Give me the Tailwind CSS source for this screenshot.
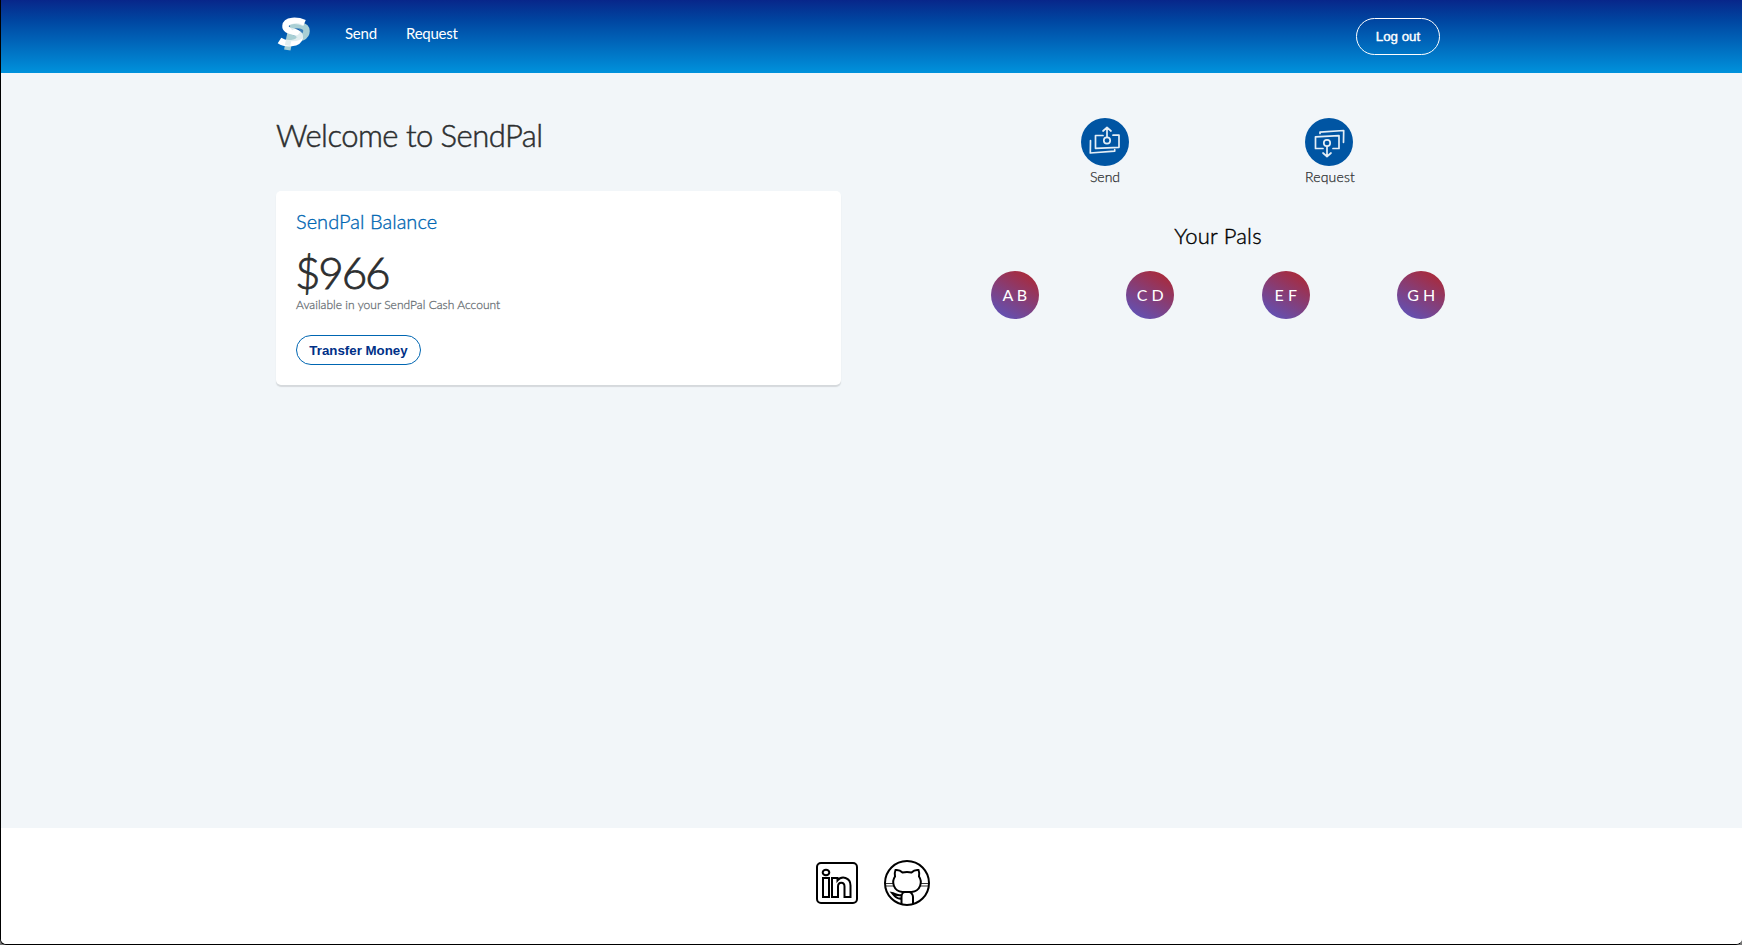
<!DOCTYPE html>
<html lang="en">
<head>
<meta charset="utf-8">
<title>SendPal</title>
<script src="https://cdn.jsdelivr.net/npm/@tailwindcss/browser@4"></script>
</head>
<body class="h-[945px] overflow-hidden bg-[#777] font-['Lato','Open_Sans',sans-serif]">
<div class="flex h-[945px] flex-col overflow-hidden rounded-b-[6px] border-b border-l border-black bg-[#f2f6f9]">
  <header class="h-[73px] shrink-0 bg-linear-to-b from-[#08268a] to-[#0092dc] pl-[275px] pr-[302px]">
    <nav class="flex items-start text-[15px] leading-5 tracking-[-0.25px] text-white">
      <svg class="mt-[16px] h-[36px] w-[36px]" viewBox="0 0 36 36" fill="none">
        <path d="M11.300 34 15.500 12M14 10.500C20 8 30.500 8.500 30.500 15c0 6-6 8-15 7.500" stroke="#a9cfd4" stroke-width="6.500"/>
        <path d="M28.500 7C21 3.800 10 3.600 9.500 10c-.5 7 15.300 4 14.300 11.500C22.500 28.500 9.500 28.500 3.500 24.500" stroke="#fff" stroke-width="6.500"/>
        <path d="M11.500 29.500 13.500 20.500M14.500 12C20 8 28 10 26.500 17c-1 4-6 6-12 5.500" stroke="#a9cfd4" stroke-opacity=".35" stroke-width="5.500"/>
      </svg>
      <a class="ml-[33px] mt-[23px] w-[61px]">Send</a>
      <a class="mt-[23px]">Request</a>
      <button class="ml-auto mt-[18px] h-[37px] w-[84px] rounded-full border border-white font-['Liberation_Sans',sans-serif] text-[13.3px] tracking-normal [-webkit-text-stroke:0.4px_white]">Log out</button>
    </nav>
  </header>
  <main class="flex h-[755px] shrink-0 pl-[275px]">
    <section class="w-[565px]">
      <h1 class="mt-[42px] h-10 text-[31px] font-light leading-10 tracking-[-0.53px] text-[#2c2e2f] [-webkit-text-stroke:0.5px_#2c2e2f]">Welcome to SendPal</h1>
      <div class="mt-[36px] h-[194px] rounded-[5px] bg-white px-5 shadow-[0_2px_1px_#d5d9dc]">
        <h2 class="pt-[17px] text-[20px] font-light leading-[26px] tracking-[0.04px] text-[#0066b2] [-webkit-text-stroke:0.35px_#0066b2]">SendPal Balance</h2>
        <p class="-ml-px mt-[13px] text-[44px] font-light leading-[50px] tracking-[-2.2px] text-[#2c2e2f] [-webkit-text-stroke:0.8px_#2c2e2f]">$966</p>
        <p class="text-[12px] font-light leading-4 tracking-[0.03px] text-[#6c7378] [-webkit-text-stroke:0.3px_#6c7378]">Available in your SendPal Cash Account</p>
        <button class="mt-[22px] h-[30px] w-[125px] rounded-full border border-[#0066b2] pt-px font-['Liberation_Sans',sans-serif] text-[13.3px] font-bold text-[#003087]">Transfer Money</button>
      </div>
    </section>
    <section class="ml-[106px] w-[542px]">
      <div class="mr-[2px] mt-[45px] flex justify-center text-center text-[14px] font-light leading-5 text-[#2c2e2f] [-webkit-text-stroke:0.25px_#2c2e2f]">
        <div class="flex w-[224px] flex-col items-center">
          <svg class="h-12 w-12" viewBox="0 0 48 48" fill="none" stroke="#e4eef6" stroke-width="1.700" stroke-linejoin="round" stroke-linecap="round">
            <circle cx="24" cy="24" r="24" fill="#0055a3" stroke="none"/>
            <path d="M22 17.500h-7.500v12.800l23.500-1V17.200h-6"/>
            <path d="M9.500 22.500 9.300 35l24.400-1.800v-1.500"/>
            <circle cx="26" cy="22.500" r="3.200"/>
            <path d="M26 19V10M22 13l4-3.500 4 3.500"/>
          </svg>
          <span class="mt-px">Send</span>
        </div>
        <div class="flex w-[224px] flex-col items-center">
          <svg class="h-12 w-12" viewBox="0 0 48 48" fill="none" stroke="#e4eef6" stroke-width="1.700" stroke-linejoin="round" stroke-linecap="round">
            <circle cx="24" cy="24" r="24" fill="#0055a3" stroke="none"/>
            <path d="M18 30.500h-7.500V18.800l23.500-1.200v12.900h-6"/>
            <path d="M15 15.500v-1.400l23.700-1.600-.2 11.800"/>
            <circle cx="22" cy="25" r="3.200"/>
            <path d="M22 28.500V38M18 35l4 3.500 4-3.500"/>
          </svg>
          <span class="ml-[2px] mt-px tracking-[0.2px]">Request</span>
        </div>
      </div>
      <h2 class="mt-[34px] text-center text-[22px] font-light leading-[30px] tracking-[0.2px] text-black [-webkit-text-stroke:0.4px_black]">Your Pals</h2>
      <div class="mt-5 grid grid-cols-4 justify-items-center text-[16px] text-white">
        <div class="flex h-12 w-12 items-center justify-center rounded-full bg-linear-[30deg] from-[#5856c4] to-[#b3252a]">A B</div>
        <div class="flex h-12 w-12 items-center justify-center rounded-full bg-linear-[30deg] from-[#5856c4] to-[#b3252a]">C D</div>
        <div class="flex h-12 w-12 items-center justify-center rounded-full bg-linear-[30deg] from-[#5856c4] to-[#b3252a]">E F</div>
        <div class="flex h-12 w-12 items-center justify-center rounded-full bg-linear-[30deg] from-[#5856c4] to-[#b3252a]">G H</div>
      </div>
    </section>
  </main>
  <footer class="flex flex-1 items-start justify-center bg-white pl-[2px] pt-[31px]">
    <svg class="mt-[2px] h-[44px] w-[44px]" viewBox="0 0 44 44" fill="none" stroke="#000" stroke-width="2">
      <rect x="2" y="2" width="40" height="40" rx="4"/>
      <ellipse cx="11" cy="11.500" rx="3.300" ry="2.800"/>
      <path d="M8 17h6v19H8zM17 17h5.500v2.500c4-5 13-3.500 13 5V36h-6V25.500c0-5-6.500-5-6.500 0V36h-6z"/>
    </svg>
    <svg class="ml-[24px] h-[48px] w-[48px]" viewBox="0 0 48 48" fill="none" stroke="#000" stroke-width="2">
      <circle cx="24" cy="24" r="22"/>
      <path d="M12.500 11c3-.5 5.500 1 7 2.500q4.500-1 9 0c1.500-1.500 4-3 7-2.500 1 2.500 1 4.500.5 6.500 3.500 5 2 14.500-7.500 15.500h-9c-9.500-1-11-10.500-7.500-15.500-.5-2-.5-4 .5-6.500z"/>
      <path d="M18.500 45.500V38c0-2.500 1.500-5 3.500-5h4c2 0 4 2.500 4 5v7.500"/>
      <path d="M18.500 39.500c-5 1-7.500-3-9.500-5.500 3 .5 4 3 9.500 2"/>
      <path d="M2 24.500h8.500M2 27h9M37.500 24.500H46M37 27h9" stroke-width=".8"/>
    </svg>
  </footer>
</div>
</body>
</html>
